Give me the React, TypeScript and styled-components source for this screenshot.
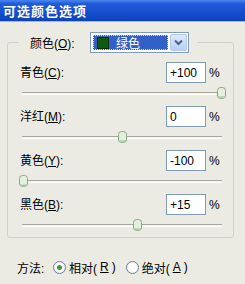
import React from 'react';
import styled, { createGlobalStyle } from 'styled-components';

const GlobalStyle = createGlobalStyle`
  html, body {
    margin: 0;
    padding: 0;
    background: #ecebe3;
  }
  body {
    font-family: "Liberation Sans", "Noto Sans CJK SC", sans-serif;
    font-size: 12px;
    color: #000;
  }
`;

interface Channel {
  name: string;
  key: string;
  value: number;
}

const channels: Channel[] = [
  { name: '青色', key: 'C', value: 100 },
  { name: '洋红', key: 'M', value: 0 },
  { name: '黄色', key: 'Y', value: -100 },
  { name: '黑色', key: 'B', value: 15 },
];

const formatValue = (v: number) => (v > 0 ? `+${v}` : `${v}`);

const Thumb = () => (
  <svg width="11" height="12" viewBox="0 0 11 12">
    <path
      d="M1.5 3.5 Q1.5 0.5 4.5 0.5 L6.5 0.5 Q9.5 0.5 9.5 3.5 L9.5 9 Q9.5 11.5 5.5 11.5 Q1.5 11.5 1.5 9 Z"
      fill="#e4f0dc"
      stroke="#8aa68a"
    />
    <path d="M3 9.5 Q5.5 11 8 9.5" stroke="#9ed49e" fill="none" strokeWidth="1.4" />
  </svg>
);

const Slider: React.FC<{ value: number }> = ({ value }) => {
  const left = ((value + 100) / 200) * 198 + 1;
  return (
    <SliderWrap>
      <Track />
      <ThumbBox style={{ left }}>
        <Thumb />
      </ThumbBox>
    </SliderWrap>
  );
};

const Mnemonic: React.FC<{ name: string; k: string }> = ({ name, k }) => (
  <>
    {name}(<u>{k}</u>):
  </>
);

const App: React.FC = () => (
  <Window>
    <GlobalStyle />
    <TitleBar>可选颜色选项</TitleBar>
    <Body>
      <Group>
        <Legend>
          <LegendLabel>
            <Mnemonic name="颜色" k="O" />
          </LegendLabel>
          <Select>
            <SelectValue>
              <Swatch />
              绿色
            </SelectValue>
            <SelectButton>
              <svg width="9" height="7" viewBox="0 0 9 7">
                <path d="M1 1.5 L4.5 5 L8 1.5" stroke="#4d6185" strokeWidth="2" fill="none" />
              </svg>
            </SelectButton>
          </Select>
        </Legend>
        {channels.map((c) => (
          <Row key={c.key}>
            <ControlLine>
              <RowLabel>
                <Mnemonic name={c.name} k={c.key} />
              </RowLabel>
              <NumberBox>{formatValue(c.value)}</NumberBox>
              <Percent>%</Percent>
            </ControlLine>
            <Slider value={c.value} />
          </Row>
        ))}
      </Group>
      <MethodRow>
        <MethodLabel>方法:</MethodLabel>
        <Radio>
          <RadioCircle $checked />
          相对(<u>R</u>)
        </Radio>
        <Radio>
          <RadioCircle />
          绝对(<u>A</u>)
        </Radio>
      </MethodRow>
    </Body>
  </Window>
);

const Window = styled.div`
  width: 245px;
  height: 284px;
  background: #ecebe3;
  overflow: hidden;
`;

const TitleBar = styled.div`
  height: 21px;
  padding-left: 3px;
  display: flex;
  align-items: center;
  color: #fff;
  font-weight: bold;
  font-size: 13px;
  letter-spacing: 1px;
  background: linear-gradient(to bottom, #4a86ee 0%, #1f5ad8 18%, #134ccb 70%, #0d42b8 100%);
  border-bottom: 1px solid #9fb6e6;
`;

const Body = styled.div`
  padding: 10px 0 0 7px;
`;

const Group = styled.fieldset`
  margin: 0;
  padding: 0 0 5px 12px;
  width: 227px;
  box-sizing: border-box;
  border: 1px solid #d2d0c4;
  border-radius: 3px;
  min-width: 0;
`;

const Legend = styled.legend`
  display: flex;
  align-items: center;
  margin-left: -1px;
  padding: 0 8px 0 11px;
  height: 21px;
`;

const LegendLabel = styled.span`
  width: 60px;
`;

const Select = styled.div`
  display: flex;
  width: 99px;
  height: 21px;
  box-sizing: border-box;
  border: 1px solid #7f9db9;
  background: #fff;
`;

const SelectValue = styled.div`
  flex: 1;
  margin: 2px 1px 2px 2px;
  display: flex;
  align-items: center;
  gap: 7px;
  padding-left: 4px;
  background: #3161c8;
  color: #fff;
  outline: 1px dotted #e0e0a0;
  outline-offset: -1px;
`;

const Swatch = styled.span`
  width: 12px;
  height: 12px;
  background: #0c5a0c;
  border: 1px solid #0a2a0a;
  box-sizing: border-box;
`;

const SelectButton = styled.div`
  width: 17px;
  margin: 1px;
  display: flex;
  align-items: center;
  justify-content: center;
  border-radius: 2px;
  background: linear-gradient(to bottom, #dde8fd, #b8cdf7);
  border: 1px solid #b4c8f4;
  box-sizing: border-box;
`;

const Row = styled.div`
  margin-top: 9px;
  & + & {
    margin-top: 6px;
  }
  width: 202px;
`;

const ControlLine = styled.div`
  display: flex;
  align-items: flex-start;
  height: 22px;
`;

const RowLabel = styled.span`
  flex: 1;
  padding-top: 1px;
`;

const NumberBox = styled.div`
  width: 40px;
  height: 21px;
  box-sizing: border-box;
  border: 1px solid #7f9db9;
  background: #fff;
  padding: 3px 0 0 3px;
  font-size: 12px;
`;

const Percent = styled.span`
  width: 13px;
  margin-left: 3px;
  padding-top: 4px;
`;

const SliderWrap = styled.div`
  position: relative;
  height: 14px;
  margin: 2px 0 0 2px;
  width: 200px;
`;

const Track = styled.div`
  position: absolute;
  left: 0;
  right: 0;
  top: 6px;
  height: 3px;
  border-top: 1px solid #a9a89c;
  border-bottom: 1px solid #fff;
  background: #f4f3ea;
  box-sizing: border-box;
`;

const ThumbBox = styled.div`
  position: absolute;
  top: 1px;
  margin-left: -5px;
  width: 11px;
  height: 12px;
`;

const MethodRow = styled.div`
  display: flex;
  align-items: center;
  margin: 21px 0 0 10px;
  height: 16px;
`;

const MethodLabel = styled.span`
  width: 36px;
`;

const Radio = styled.label`
  display: flex;
  align-items: center;
  gap: 3px;
  margin-right: 10px;
`;

const RadioCircle = styled.span<{ $checked?: boolean }>`
  width: 13px;
  height: 13px;
  box-sizing: border-box;
  border-radius: 50%;
  border: 1px solid #6a7f95;
  background: radial-gradient(circle, #fff 40%, #e6e6de 100%);
  display: flex;
  align-items: center;
  justify-content: center;
  &::after {
    content: '';
    width: 5px;
    height: 5px;
    border-radius: 50%;
    background: ${(p) => (p.$checked ? '#3c9a3c' : 'transparent')};
  }
`;

export default App;
